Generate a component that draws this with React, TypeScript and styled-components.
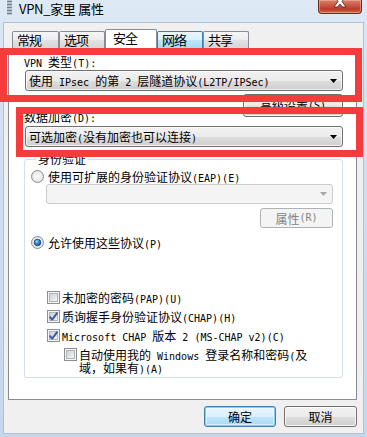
import React from "react";
import styled, { createGlobalStyle, css } from "styled-components";

const GlobalStyle = createGlobalStyle`
  * { box-sizing: border-box; }
  html, body { margin: 0; padding: 0; }
  body {
    font-family: "Noto Sans CJK SC", sans-serif;
    font-size: 12px;
    color: #000;
  }
`;

const Window = styled.div`
  position: relative;
  width: 367px;
  height: 437px;
  overflow: hidden;
  background: linear-gradient(to bottom, #dee9f5 0px, #d4e2f1 80px, #c5d7ec 100%);
  display: flex;
  flex-direction: column;
`;

const TitleBar = styled.div`
  height: 22px;
  flex-shrink: 0;
  display: flex;
  align-items: flex-start;
`;

const TitleIcon = styled.svg`
  margin-left: 6px;
  flex-shrink: 0;
`;

const TitleText = styled.div`
  margin-left: 7px;
  margin-top: 1px;
  font-size: 13px;
  line-height: 16px;
  color: #000;
  letter-spacing: -0.3px;
`;

const CloseButton = styled.div`
  margin-left: auto;
  margin-right: 5px;
  width: 44px;
  height: 14px;
  border: 1px solid #6f2a20;
  border-top: none;
  border-radius: 0 0 4px 4px;
  background: linear-gradient(to bottom, #d9806c 0%, #c75340 45%, #b83b28 70%, #d06a4e 100%);
  box-shadow: inset 0 0 0 1px rgba(255, 200, 180, 0.45);
  display: flex;
  justify-content: center;
  overflow: hidden;
`;

const Client = styled.div`
  margin-left: 3px;
  width: 361px;
  height: 412px;
  border: 1px solid #b3c0cf;
  background: #f0f0f0;
  padding: 6px 6px 0 4px;
  display: flex;
  flex-direction: column;
`;

const TabStrip = styled.div`
  height: 19px;
  padding-left: 4px;
  display: flex;
  align-items: flex-end;
`;

type TabState = "normal" | "selected" | "hot";

const Tab = styled.div<{ $state: TabState; $w: number }>`
  width: ${(p) => p.$w}px;
  height: 17px;
  padding-left: 4px;
  border: 1px solid #898c95;
  border-bottom: none;
  border-radius: 2px 2px 0 0;
  font-size: 13px;
  line-height: 15px;
  letter-spacing: -1px;
  white-space: nowrap;
  background: linear-gradient(to bottom, #f6f6f6 0%, #ececec 50%, #e1e1e1 51%, #d6d6d6 100%);
  ${(p) =>
    p.$state === "selected" &&
    css`
      height: 20px;
      margin-bottom: -1px;
      padding-left: 7px;
      background: #fff;
      position: relative;
      z-index: 1;
    `}
  ${(p) =>
    p.$state === "hot" &&
    css`
      border-color: #3c7fb1;
      background: linear-gradient(to bottom, #eaf6fd 0%, #d9f0fc 50%, #bee6fd 51%, #a7d9f5 100%);
    `}
`;

const Page = styled.div`
  height: 352px;
  border: 1px solid #898c95;
  background: #fff;
  padding: 6px 13px 0 16px;
  display: flex;
  flex-direction: column;
`;

const FieldLabel = styled.div<{ $mt: number }>`
  margin-top: ${(p) => p.$mt}px;
  margin-left: -1px;
  height: 13px;
  line-height: 13px;
  white-space: nowrap;
`;

const Combo = styled.div<{ $mt: number; $disabled?: boolean }>`
  margin-top: ${(p) => p.$mt}px;
  height: 21px;
  border: 1px solid #707070;
  border-radius: 3px;
  background: linear-gradient(to bottom, #f2f2f2 0%, #ebebeb 50%, #dddddd 51%, #cfcfcf 100%);
  box-shadow: inset 0 0 0 1px rgba(255, 255, 255, 0.7);
  display: flex;
  align-items: center;
  padding: 0 5px 0 3px;
  line-height: 13px;
  white-space: nowrap;
  ${(p) =>
    p.$disabled &&
    css`
      height: 20px;
      margin-left: 15px;
      border-color: #c9cdd0;
      background: #f4f4f4;
      box-shadow: none;
    `}
`;

const ComboText = styled.div`
  flex: 1;
`;

const Arrow = styled.svg`
  flex-shrink: 0;
`;

const ButtonRow = styled.div<{ $mt: number; $gap?: number }>`
  margin-top: ${(p) => p.$mt}px;
  display: flex;
  justify-content: flex-end;
  gap: ${(p) => p.$gap ?? 0}px;
`;

type BtnKind = "normal" | "default" | "disabled";

const Button = styled.div<{ $w: number; $h: number; $kind?: BtnKind }>`
  width: ${(p) => p.$w}px;
  height: ${(p) => p.$h}px;
  border: 1px solid #707070;
  border-radius: 3px;
  background: linear-gradient(to bottom, #f2f2f2 0%, #ebebeb 50%, #dddddd 51%, #cfcfcf 100%);
  box-shadow: inset 0 0 0 1px rgba(255, 255, 255, 0.8);
  display: flex;
  align-items: center;
  justify-content: center;
  line-height: 13px;
  white-space: nowrap;
  ${(p) =>
    p.$kind === "default" &&
    css`
      border-color: #3c7fb1;
      background: linear-gradient(to bottom, #eaf6fd 0%, #d9f0fc 50%, #bee6fd 51%, #a7d9f5 100%);
      box-shadow: inset 0 0 0 1px #8ccbee, inset 0 0 0 2px rgba(255, 255, 255, 0.5);
    `}
  ${(p) =>
    p.$kind === "disabled" &&
    css`
      border-color: #adb2b5;
      background: #f4f4f4;
      box-shadow: none;
      color: #838383;
    `}
`;

const GroupBox = styled.fieldset`
  margin: 5px 0 0 -1px;
  padding: 0 9px 3px 6px;
  border: 1px solid #d5dfe5;
  border-radius: 3px;
  min-width: 0;
`;

const Legend = styled.legend`
  margin-left: 5px;
  padding: 0 2px;
  font-size: 12px;
  line-height: 14px;
`;

const GroupBody = styled.div`
  display: flex;
  flex-direction: column;
`;

const OptionRow = styled.div<{ $mt: number; $ml?: number; $gap?: number }>`
  margin-top: ${(p) => p.$mt}px;
  margin-left: ${(p) => p.$ml ?? 0}px;
  display: flex;
  align-items: flex-start;
  gap: ${(p) => p.$gap ?? 4}px;
  line-height: 13px;
`;

const OptionText = styled.div<{ $maxW?: number }>`
  line-height: 13px;
  ${(p) => (p.$maxW ? `width: ${p.$maxW}px;` : "white-space: nowrap;")}
`;

const DisabledWrap = styled.div`
  display: flex;
  justify-content: flex-end;
  margin-top: 4px;
`;

const Annotation = styled.div<{ $l: number; $t: number; $w: number; $h: number }>`
  position: absolute;
  left: ${(p) => p.$l}px;
  top: ${(p) => p.$t}px;
  width: ${(p) => p.$w}px;
  height: ${(p) => p.$h}px;
  border: 7px solid #f53b3b;
  pointer-events: none;
  z-index: 5;
`;

const Lat = styled.span`
  font-family: "DejaVu Sans Mono", "Liberation Mono", monospace;
  font-size: 10px;
  line-height: 0;
  white-space: pre;
`;

function Mixed({ text }: { text: string }) {
  const parts = text.split(/([\x20-\x7e]+)/).filter((s) => s.length > 0);
  return (
    <>
      {parts.map((p, i) =>
        /^[\x20-\x7e]+$/.test(p) ? <Lat key={i}>{p}</Lat> : <React.Fragment key={i}>{p}</React.Fragment>
      )}
    </>
  );
}

function DropArrow({ color }: { color: string }) {
  return (
    <Arrow width="7" height="4" viewBox="0 0 7 4">
      <polygon points="0,0 7,0 3.5,4" fill={color} />
    </Arrow>
  );
}

function Radio({ checked }: { checked?: boolean }) {
  const id = checked ? "rc" : "ru";
  return (
    <svg width="13" height="13" viewBox="0 0 13 13" style={{ flexShrink: 0 }}>
      <defs>
        <radialGradient id={`${id}-bg`} cx="0.5" cy="0.5" r="0.6">
          <stop offset="0" stopColor="#fbfbfb" />
          <stop offset="0.6" stopColor="#ececec" />
          <stop offset="1" stopColor="#c9cbcf" />
        </radialGradient>
        <radialGradient id={`${id}-dot`} cx="0.4" cy="0.35" r="0.7">
          <stop offset="0" stopColor="#a9e2fb" />
          <stop offset="0.45" stopColor="#2f8dd3" />
          <stop offset="1" stopColor="#0f4f92" />
        </radialGradient>
      </defs>
      <circle cx="6.5" cy="6.5" r="6" fill={`url(#${id}-bg)`} stroke="#8e8f8f" strokeWidth="1" />
      {checked && <circle cx="6.5" cy="6.5" r="3.3" fill={`url(#${id}-dot)`} stroke="#1b3f73" strokeWidth="0.8" />}
    </svg>
  );
}

function Check({ checked }: { checked?: boolean }) {
  return (
    <svg width="13" height="13" viewBox="0 0 13 13" style={{ flexShrink: 0 }}>
      <defs>
        <linearGradient id="cbg" x1="0" y1="0" x2="1" y2="1">
          <stop offset="0" stopColor="#cbcfd5" />
          <stop offset="1" stopColor="#f6f6f6" />
        </linearGradient>
      </defs>
      <rect x="0.5" y="0.5" width="12" height="12" fill="#f4f4f4" stroke="#8e8f8f" />
      <rect x="2.5" y="2.5" width="8" height="8" fill="url(#cbg)" stroke="#b0b5bb" />
      {checked && (
        <path d="M2.6 6.6 L5.2 9.6 L10.4 2.6" fill="none" stroke="#3d57a3" strokeWidth="1.9" strokeLinejoin="round" />
      )}
    </svg>
  );
}

export default function App() {
  return (
    <>
      <GlobalStyle />
      <Window>
        <TitleBar>
          <TitleIcon width="6" height="15" viewBox="0 0 6 15">
            <rect x="0" y="0" width="6" height="15" fill="#b6c2cf" />
            <rect x="0" y="0" width="1" height="15" fill="#e6ecf2" />
            {[1, 4, 7, 10, 13].map((y) => (
              <rect key={y} x="1" y={y} width="5" height="1" fill="#6f8093" />
            ))}
          </TitleIcon>
          <TitleText>VPN_家里 属性</TitleText>
          <CloseButton>
            <svg width="14" height="13" viewBox="0 0 14 13" style={{ marginTop: -5 }}>
              <path
                d="M1 1 L4.5 1 L7 4 L9.5 1 L13 1 L9 6.5 L13 12 L9.5 12 L7 9 L4.5 12 L1 12 L5 6.5 Z"
                fill="#fff"
                stroke="#4a1a12"
                strokeWidth="0.8"
              />
            </svg>
          </CloseButton>
        </TitleBar>

        <Client>
          <TabStrip>
            <Tab $state="normal" $w={47}>常规</Tab>
            <Tab $state="normal" $w={46}>选项</Tab>
            <Tab $state="selected" $w={52}>安全</Tab>
            <Tab $state="hot" $w={46}>网络</Tab>
            <Tab $state="normal" $w={46}>共享</Tab>
          </TabStrip>

          <Page>
            <FieldLabel $mt={0}>
              <Mixed text="VPN 类型(T):" />
            </FieldLabel>
            <Combo $mt={2}>
              <ComboText>
                <Mixed text="使用 IPsec 的第 2 层隧道协议(L2TP/IPSec)" />
              </ComboText>
              <DropArrow color="#000" />
            </Combo>

            <ButtonRow $mt={3}>
              <Button $w={100} $h={23}>
                高级设置<Mixed text="(S)" />
              </Button>
            </ButtonRow>

            <FieldLabel $mt={-7}>
              数据加密<Mixed text="(D):" />
            </FieldLabel>
            <Combo $mt={3}>
              <ComboText>
                可选加密<Mixed text="(" />没有加密也可以连接<Mixed text=")" />
              </ComboText>
              <DropArrow color="#000" />
            </Combo>

            <GroupBox>
              <Legend>身份验证</Legend>
              <GroupBody>
                <OptionRow $mt={4}>
                  <Radio />
                  <OptionText>
                    <Mixed text="使用可扩展的身份验证协议(EAP)(E)" />
                  </OptionText>
                </OptionRow>
                <Combo $mt={1} $disabled>
                  <ComboText />
                  <DropArrow color="#a7a7a7" />
                </Combo>
                <DisabledWrap>
                  <Button $w={73} $h={20} $kind="disabled">
                    属性<Mixed text="(R)" />
                  </Button>
                </DisabledWrap>

                <OptionRow $mt={8}>
                  <Radio checked />
                  <OptionText>
                    <Mixed text="允许使用这些协议(P)" />
                  </OptionText>
                </OptionRow>

                <OptionRow $mt={42} $ml={16} $gap={2}>
                  <Check />
                  <OptionText>
                    <Mixed text="未加密的密码(PAP)(U)" />
                  </OptionText>
                </OptionRow>
                <OptionRow $mt={6} $ml={16} $gap={2}>
                  <Check checked />
                  <OptionText>
                    <Mixed text="质询握手身份验证协议(CHAP)(H)" />
                  </OptionText>
                </OptionRow>
                <OptionRow $mt={6} $ml={16} $gap={2}>
                  <Check checked />
                  <OptionText>
                    <Mixed text="Microsoft CHAP 版本 2 (MS-CHAP v2)(C)" />
                  </OptionText>
                </OptionRow>
                <OptionRow $mt={6} $ml={33} $gap={2}>
                  <Check />
                  <OptionText $maxW={236}>
                    <Mixed text="自动使用我的 Windows 登录名称和密码(及域，如果有)(A)" />
                  </OptionText>
                </OptionRow>
              </GroupBody>
            </GroupBox>
          </Page>

          <ButtonRow $mt={6} $gap={8}>
            <Button $w={72} $h={21} $kind="default">确定</Button>
            <Button $w={73} $h={21}>取消</Button>
          </ButtonRow>
        </Client>

        <Annotation $l={0} $t={48} $w={362} $h={54} />
        <Annotation $l={16} $t={107} $w={347} $h={50} />
      </Window>
    </>
  );
}
